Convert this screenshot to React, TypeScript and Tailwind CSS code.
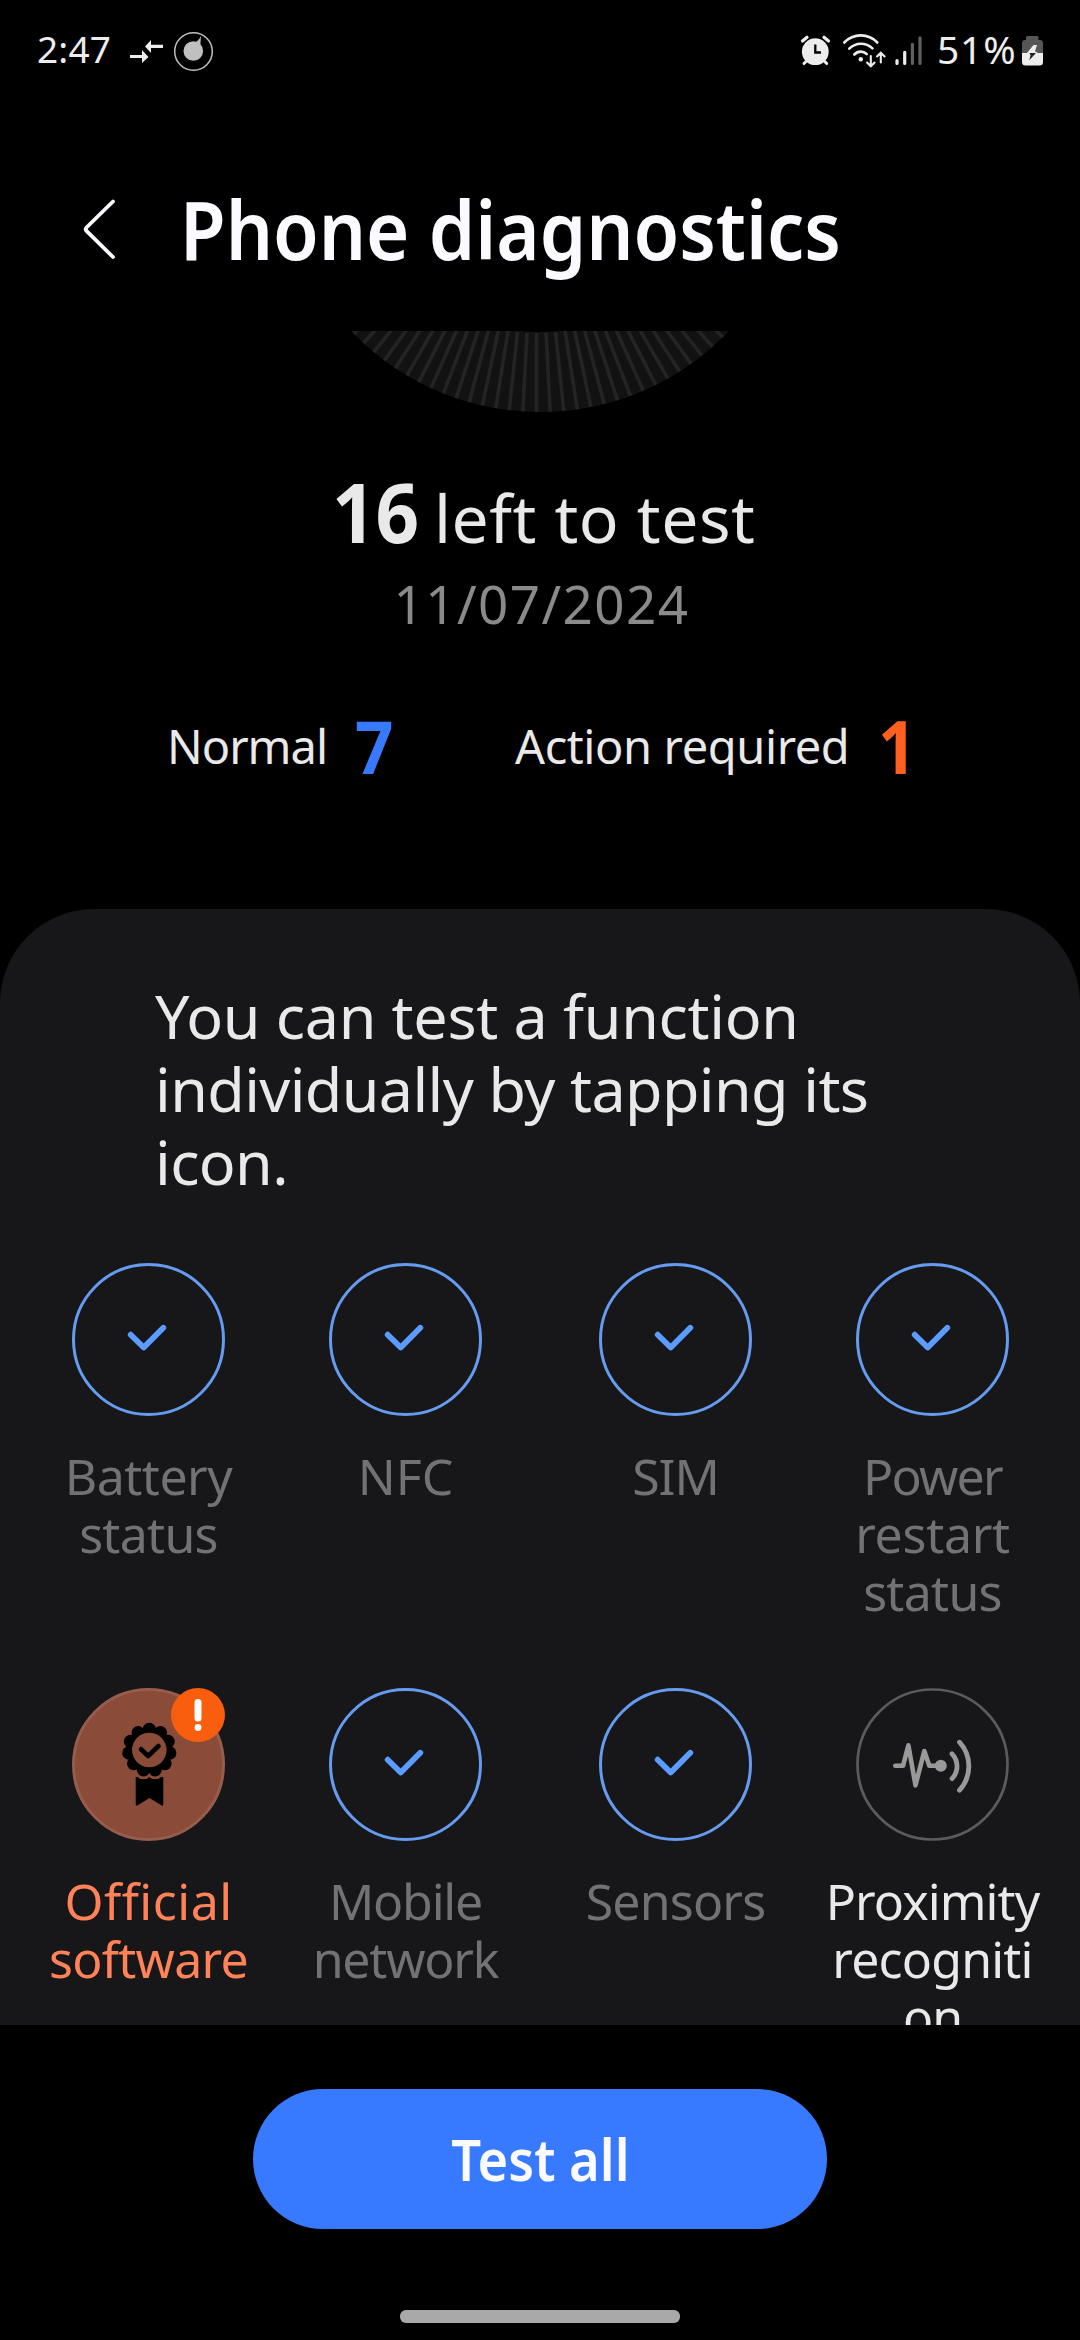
import type { ReactNode } from "react";

function StatusBar() {
  return (
    <div className="flex h-[97px] items-center pl-[37px] text-[#ededed]">
      <span className="w-[88px] text-[37px] leading-[48px] tracking-[0.2px]">2:47</span>
      <svg className="h-[97px] w-[45px]" viewBox="125 0 45 97" fill="#ededed">
        <path d="M130 55h12v-5l6.5 7-6.5 6v-5h-12zM163 44.8h-12V40l-6 6.5 6 6.5v-5h12z" />
      </svg>
      <svg className="h-[97px] w-[45px]" viewBox="170 0 45 97">
        <circle cx="193.5" cy="51.5" r="18.8" fill="none" stroke="#c0c0c0" strokeWidth="1.5" />
        <circle cx="193.3" cy="51" r="9.8" fill="#c0c0c0" />
        <path d="M194 43c3-1 5-3.500 7-7l-.8 11z" fill="#c0c0c0" />
      </svg>
      <svg className="ml-auto h-[97px] w-[140px]" viewBox="795 0 140 97" fill="none" strokeLinecap="round">
        <circle cx="815.3" cy="51.7" r="13.400" fill="#ededed" />
        <path d="M802.500 41l4.500-3.700M828.500 41l-4.500-3.700" stroke="#ededed" strokeWidth="3.200" />
        <path d="M806 61.500l-2 2M824.700 61.500l2 2" stroke="#ededed" strokeWidth="3" />
        <path d="M815.300 44.500v8h5.700" stroke="#000" strokeWidth="2.300" strokeLinecap="butt" />
        <path d="M844.300 42.500c9-9.500 24-9.500 33 0M849.300 48.700c6.500-6.600 16.500-6.600 23.200-.3M854.300 54.500c3.500-3.800 9-3.800 12.500-.3" stroke="#ededed" strokeWidth="2.600" />
        <circle cx="860.800" cy="59.300" r="2.200" fill="#ededed" />
        <path d="M870.800 56v9.500M867 62.500l3.800 3.800 3.800-3.800M880.800 62.500v-9M877 56.500l3.800-3.800 3.800 3.800" stroke="#ededed" strokeWidth="2.100" />
        <path d="M897 60.500v3M904.700 52.300v11.200" stroke="#ededed" strokeWidth="3.200" />
        <path d="M912.400 44.300v19.200M920 37.800v25.700" stroke="#606060" strokeWidth="3.200" />
      </svg>
      <span className="ml-[2px] w-[83px] text-[39px] leading-[48px] tracking-[0.8px]">51%</span>
      <svg className="mr-[32px] h-[97px] w-[28px]" viewBox="1020 0 28 97">
        <path d="M1027.500 36h9.500q1.500 0 1.500 1.500V40h1.500q3 0 3 3v10h-21V43q0-3 3-3h1V37.500q0-1.500 1.500-1.500z" fill="#565656" />
        <path d="M1022 53h21v9q0 3.500-3.500 3.500h-14q-3.500 0-3.500-3.500z" fill="#ededed" />
        <path d="M1033.500 45l-6.500 8h11l-3-1.700 2-6.300z" fill="#ededed" />
        <path d="M1029.500 53h6.500l-6.700 7.300 1.200-5z" fill="#222" />
      </svg>
    </div>
  );
}

function Dial() {
  const rays = Array.from({ length: 37 }, (_, i) => (i - 18) * 3);
  return (
    <svg className="h-[82px] w-[1080px]" viewBox="0 331 1080 82">
      <clipPath id="disc">
        <circle cx="540" cy="151" r="261" />
      </clipPath>
      <circle cx="540" cy="151" r="221" fill="none" stroke="#121212" strokeWidth="80" />
      <g clipPath="url(#disc)">
        {rays.map((a) => (
          <line key={a} x1="536.5" x2="536.5" y1="333" y2="420" stroke="#242424" strokeWidth="3.600" transform={`rotate(${a} 536.5 151)`} />
        ))}
      </g>
    </svg>
  );
}

function CheckIcon() {
  return (
    <svg className="size-[153px]" viewBox="0 0 153 153" fill="none">
      <circle cx="76.500" cy="76.500" r="75" stroke="#669bf0" strokeWidth="3" />
      <path d="M58.700 71.700l13 12.800 19.600-19.700" stroke="#5c9bff" strokeWidth="5.800" strokeLinecap="round" strokeLinejoin="round" />
    </svg>
  );
}

function AwardIcon() {
  const bumps = Array.from({ length: 11 }, (_, i) => {
    const a = (i * 2 * Math.PI) / 11;
    return [77.3 + 20.6 * Math.sin(a), 62 - 20.6 * Math.cos(a)];
  });
  return (
    <div className="relative size-[153px]">
      <svg className="size-[153px]" viewBox="0 0 153 153" fill="none">
        <circle cx="76.500" cy="76.500" r="75" fill="#8a4b39" stroke="#965c4c" strokeWidth="3" />
        <path d="M63.700 89h27.600v27q0 2.500-2 1.200l-11.800-7.200-11.800 7.200q-2 1.200-2-1.200z" fill="#000" />
        {bumps.map(([x, y], i) => (
          <circle key={i} cx={x} cy={y} r="9.400" fill="#8a4b39" />
        ))}
        {bumps.map(([x, y], i) => (
          <circle key={i} cx={x} cy={y} r="6.700" fill="#000" />
        ))}
        <circle cx="77.300" cy="62" r="22" fill="#000" />
        <circle cx="77.300" cy="62" r="17.300" fill="#8a4b39" />
        <path d="M69 61.300l7.200 6.700 10.300-10" stroke="#000" strokeWidth="4.600" strokeLinecap="round" strokeLinejoin="round" />
      </svg>
      <svg className="absolute top-0 right-0 size-[54px]" viewBox="0 0 54 54">
        <circle cx="27" cy="27" r="27" fill="#f95d0e" />
        <path d="M27 14.500v15.500" stroke="#fff" strokeWidth="7" strokeLinecap="round" />
        <circle cx="27" cy="39.500" r="3.400" fill="#fff" />
      </svg>
    </div>
  );
}

function ProximityIcon() {
  return (
    <svg className="size-[153px]" viewBox="0 0 153 153" fill="none" strokeLinecap="round" strokeLinejoin="round">
      <circle cx="76.500" cy="76.500" r="75" stroke="#5b5b5d" strokeWidth="2.700" />
      <path d="M39.300 77.800h7.700l5.400-20.500 7.100 40 8.800-34.200 5 14.700h11" stroke="#999" strokeWidth="4.600" />
      <circle cx="84.800" cy="77.800" r="6" fill="#999" />
      <path d="M96 65.800a17.800 17.800 0 0 1 0 24.800M103.500 54.200a35.500 35.500 0 0 1 0 48" stroke="#999" strokeWidth="4.800" />
    </svg>
  );
}

type Line = [text: string, tracking: string];
type Tile = { lines: Line[]; icon: ReactNode; color: string };

const done = "text-[#727274]";
const rows: Tile[][] = [
  [
    { lines: [["Battery", "tracking-[-0.5px]"], ["status", "tracking-[-0.7px]"]], icon: <CheckIcon />, color: done },
    { lines: [["NFC", "tracking-normal"]], icon: <CheckIcon />, color: done },
    { lines: [["SIM", "tracking-[-1px]"]], icon: <CheckIcon />, color: done },
    {
      lines: [["Power", "tracking-[-1.7px]"], ["restart", "tracking-[-0.3px]"], ["status", "tracking-[-0.7px]"]],
      icon: <CheckIcon />,
      color: done,
    },
  ],
  [
    { lines: [["Official", "tracking-[0.5px]"], ["software", "tracking-[-0.7px]"]], icon: <AwardIcon />, color: "text-[#ff8259]" },
    { lines: [["Mobile", "tracking-[-1.2px]"], ["network", "tracking-[-1.2px]"]], icon: <CheckIcon />, color: done },
    { lines: [["Sensors", "tracking-[-0.8px]"]], icon: <CheckIcon />, color: done },
    {
      lines: [["Proximity", "tracking-[-0.9px]"], ["recogniti", "tracking-[-0.8px]"], ["on", "tracking-[-1px]"]],
      icon: <ProximityIcon />,
      color: "text-[#e9e9e9]",
    },
  ],
];

export default function App() {
  return (
    <div className="flex h-[2340px] w-[1080px] flex-col overflow-hidden bg-black font-['Noto_Sans',sans-serif] text-[#e9e9e9]">
      <StatusBar />

      <header className="flex h-[234px] shrink-0 items-center pt-[28px] pl-[80px]">
        <svg className="h-[64px] w-[40px]" viewBox="80 196 40 64" fill="none">
          <path d="M113 201.500L86.500 227.500q-1.500 1.700 0 3.400L113 257" stroke="#fbfaff" strokeWidth="3.800" strokeLinecap="round" />
        </svg>
        <h1 className="ml-[60px] origin-left scale-x-[0.905] text-[82px] leading-[112px] font-semibold whitespace-nowrap text-[#fbfaff]">
          Phone diagnostics
        </h1>
      </header>

      <Dial />

      <div className="mt-[42px] flex h-[112px] items-baseline pl-[332px]">
        <span className="w-[102px] origin-left scale-x-[0.930] text-[82px] leading-[112px] font-bold">16</span>
        <span className="text-[66px] leading-[80px] tracking-[0.5px]">left to test</span>
      </div>
      <p className="mt-[2px] pl-[3px] text-center text-[53px] leading-[70px] tracking-[1.4px] text-[#8a8a8a]">11/07/2024</p>

      <div className="mt-[57px] flex h-[100px] items-start pl-[167px]">
        <span className="mt-[18px] w-[188px] text-[47px] leading-[64px] tracking-[-1px]">Normal</span>
        <span className="w-[160px] origin-left scale-x-[0.920] text-[73px] leading-[100px] font-bold text-[#387aff]">7</span>
        <span className="mt-[18px] w-[363px] text-[47px] leading-[64px] tracking-[-0.4px]">Action required</span>
        <span className="origin-left scale-x-[0.920] text-[73px] leading-[100px] font-bold text-[#ff5f1f]">1</span>
      </div>

      <main className="mt-[113px] h-[1116px] shrink-0 overflow-hidden rounded-t-[94px] bg-[#171719] pt-[70px]">
        <p className="pl-[155px] text-[61px] leading-[73px]">
          <span className="tracking-[-0.3px]">You can test a function</span>
          <br />
          <span className="tracking-[-0.6px]">individually by tapping its</span>
          <br />
          <span className="tracking-[-0.6px]">icon.</span>
        </p>
        <div className="mt-[65px] flex flex-col">
          {rows.map((row, r) => (
            <div key={r} className="flex h-[425px] pl-[20px]">
              {row.map((tile, i) => (
                <button
                  key={i}
                  className={`flex w-[257px] flex-col items-center justify-start ${i === 2 ? "ml-[13px]" : ""}`}
                >
                  {tile.icon}
                  <span className={`mt-[31px] flex flex-col text-center text-[50px] leading-[58px] ${tile.color}`}>
                    {tile.lines.map(([text, tracking]) => (
                      <span key={text} className={tracking}>
                        {text}
                      </span>
                    ))}
                  </span>
                </button>
              ))}
            </div>
          ))}
        </div>
      </main>

      <footer className="flex h-[315px] shrink-0 flex-col items-center pt-[64px]">
        <button className="flex h-[140px] w-[574px] items-center justify-center rounded-full bg-[#387aff] text-[58px] leading-[80px] font-semibold text-[#fafaff]">
          <span className="scale-x-[0.905]">Test all</span>
        </button>
        <div className="mt-[81px] h-[13px] w-[280px] rounded-[6px] bg-[#a9a9a9]" />
      </footer>
    </div>
  );
}
